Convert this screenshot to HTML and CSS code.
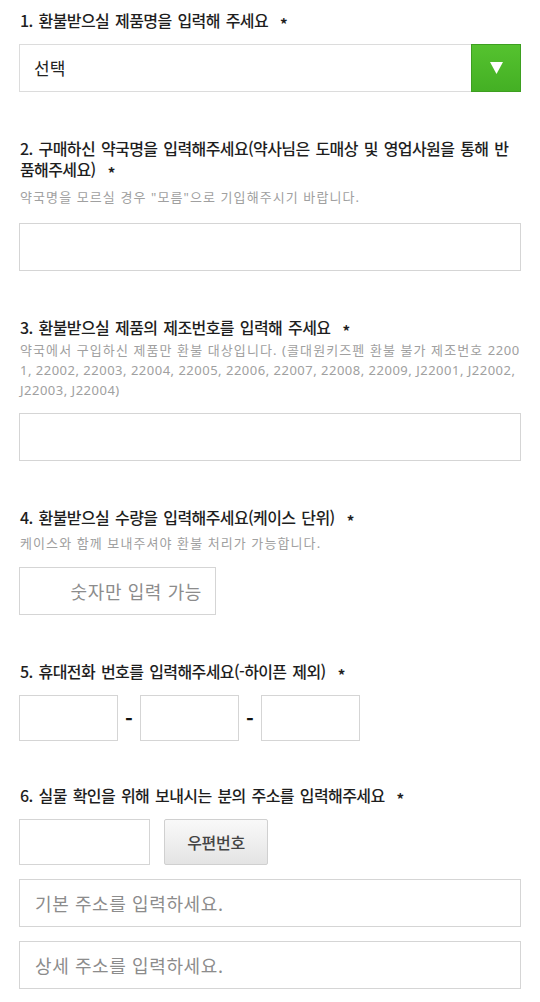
FILE: index.html
```html
<!DOCTYPE html>
<html lang="ko">
<head>
    <meta charset="UTF-8">
    <meta name="viewport" content="width=device-width, initial-scale=1.0">
    <title>환불 신청</title>
    <link rel="stylesheet" href="styles.css">
</head>
<body>
    <div class="form">
        <!-- 1. 제품 선택 -->
        <div class="q">
            <p class="q-title">1. 환불받으실 제품명을 입력해 주세요<span class="req">*</span></p>
            <div class="field select-box">
                <span class="select-text">선택</span>
                <span class="select-btn">
                    <svg width="13" height="12" viewBox="0 0 13 12"><polygon points="0,0 13,0 6.5,12" fill="#fff"/></svg>
                </span>
            </div>
        </div>

        <!-- 2. 약국명 -->
        <div class="q">
            <p class="q-title lines">2. 구매하신 약국명을 입력해주세요(약사님은 도매상 및 영업사원을 통해 반<br>품해주세요)<span class="req">*</span></p>
            <p class="q-help">약국명을 모르실 경우 "모름"으로 기입해주시기 바랍니다.</p>
            <input type="text" class="field inp">
        </div>

        <!-- 3. 제조번호 -->
        <div class="q">
            <p class="q-title">3. 환불받으실 제품의 제조번호를 입력해 주세요<span class="req">*</span></p>
            <p class="q-help lines">약국에서 구입하신 제품만 환불 대상입니다. (콜대원키즈펜 환불 불가 제조번호 <span class="num">2200<br>1, 22002, 22003, 22004, 22005, 22006, 22007, 22008, 22009, J22001, J22002,<br>J22003, J22004)</span></p>
            <input type="text" class="field inp">
        </div>

        <!-- 4. 수량 -->
        <div class="q">
            <p class="q-title">4. 환불받으실 수량을 입력해주세요(케이스 단위)<span class="req">*</span></p>
            <p class="q-help">케이스와 함께 보내주셔야 환불 처리가 가능합니다.</p>
            <input type="text" class="field inp inp-count" placeholder="숫자만 입력 가능">
        </div>

        <!-- 5. 휴대전화 -->
        <div class="q">
            <p class="q-title">5. 휴대전화 번호를 입력해주세요(-하이픈 제외)<span class="req">*</span></p>
            <div class="field phone-row">
                <input type="text" class="inp inp-phone">
                <span class="dash">-</span>
                <input type="text" class="inp inp-phone">
                <span class="dash">-</span>
                <input type="text" class="inp inp-phone">
            </div>
        </div>

        <!-- 6. 주소 -->
        <div class="q">
            <p class="q-title">6. 실물 확인을 위해 보내시는 분의 주소를 입력해주세요<span class="req">*</span></p>
            <div class="field zip-row">
                <input type="text" class="inp inp-zip">
                <button class="btn-zip">우편번호</button>
            </div>
            <input type="text" class="inp inp-addr" placeholder="기본 주소를 입력하세요.">
            <input type="text" class="inp inp-addr" placeholder="상세 주소를 입력하세요.">
        </div>
    </div>
</body>
</html>
```

FILE: styles.css
```css
    body{
        margin: 0;
        background: #fff;
        font-family: "Noto Sans CJK KR", "Noto Sans", sans-serif;
        color: #222;
    }
    .form{
        padding: 10px 19px 20px 19px;
    }

    .q + .q{
        margin-top: 46px;
    }
    .q + .q:last-child{
        margin-top: 44px;
    }
    .q-title{
        margin: 0;
        padding-left: 1px;
        font-size: 16px;
        line-height: 21px;
        font-weight: 500;
        letter-spacing: -0.6px;
        word-spacing: 2px;
        color: #1e1e1e;
    }
    .lines{
        white-space: nowrap;
    }
    .req{
        margin-left: 12px;
        font-size: 15px;
        line-height: 1;
        font-weight: 700;
        vertical-align: -3px;
    }
    .q-help{
        margin: 5px 0 0 0;
        padding-left: 1px;
        font-family: "Noto Sans", "Noto Sans CJK KR", sans-serif;
        font-size: 13px;
        line-height: 20px;
        letter-spacing: 1.1px;
        color: #a0a0a0;
    }
    .q-help .num{
        letter-spacing: 0.5px;
    }
    .q-title.lines + .q-help{
        margin-top: 7px;
    }
    .q-help.lines{
        margin-top: 2px;
    }

    .field{
        margin-top: 13px;
    }
    .q-help + .field{
        margin-top: 14px;
    }
    .q-title.lines + .q-help + .field{
        margin-top: 16px;
    }
    .q-help.lines + .field{
        margin-top: 13px;
    }

    /* select */
    .select-box{
        display: flex;
        height: 48px;
        border: 1px solid #dcdcdc;
        box-sizing: border-box;
    }
    .select-text{
        flex: 1;
        padding-left: 14px;
        font-size: 17px;
        line-height: 46px;
        color: #222;
    }
    .select-btn{
        display: flex;
        align-items: center;
        justify-content: center;
        width: 50px;
        margin: -1px -1px -1px 0;
        background: linear-gradient(#55c22f, #44b024);
        border: 1px solid #3d9f20;
        box-sizing: border-box;
    }

    /* inputs */
    .inp{
        display: block;
        box-sizing: border-box;
        width: 100%;
        height: 48px;
        margin: 0;
        padding: 0 15px;
        border: 1px solid #d5d5d5;
        border-radius: 0;
        background: #fff;
        font-family: "Noto Sans CJK KR", sans-serif;
        font-size: 18px;
        letter-spacing: 0.6px;
        color: #333;
        outline: none;
    }
    .inp::placeholder{
        color: #8c8c8c;
    }
    .inp-count{
        width: 197px;
        text-align: right;
        padding-right: 13px;
    }

    .phone-row{
        display: flex;
        align-items: center;
    }
    .inp-phone{
        width: 99px;
        height: 46px;
    }
    .dash{
        width: 22px;
        text-align: center;
        font-size: 21px;
        font-weight: 700;
        line-height: 1;
        color: #111;
    }

    .zip-row{
        display: flex;
        gap: 14px;
    }
    .inp-zip{
        width: 131px;
        height: 46px;
    }
    .btn-zip{
        width: 104px;
        height: 46px;
        border: 1px solid #d0d0d0;
        border-radius: 2px;
        background: linear-gradient(#f9f9f9, #e4e4e4);
        font-family: "Noto Sans CJK KR", sans-serif;
        font-size: 16px;
        font-weight: 500;
        letter-spacing: -0.3px;
        color: #444;
        cursor: pointer;
    }
    .inp-addr{
        margin-top: 14px;
    }
```
